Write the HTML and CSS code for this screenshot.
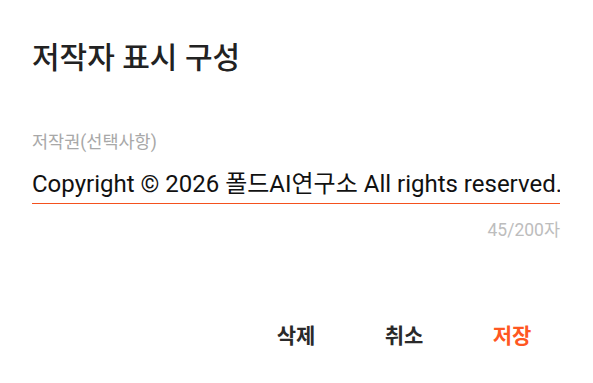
FILE: index.html
```html
<!DOCTYPE html>
<html lang="ko">
<head>
  <meta charset="UTF-8" />
  <meta name="viewport" content="width=device-width, initial-scale=1.0" />
  <title>저작자 표시 구성</title>
  <link rel="stylesheet" href="styles.css">
</head>
<body>
  <div class="dialog">
    <h1 class="dialog-title">저작자 표시 구성</h1>

    <div class="field">
      <label class="field-label" for="copyright">저작권(선택사항)</label>
      <input id="copyright" class="field-input" type="text" value="Copyright © 2026 폴드AI연구소 All rights reserved." />
      <div class="field-counter">45/200자</div>
    </div>

    <div class="dialog-actions">
      <button class="action">삭제</button>
      <button class="action">취소</button>
      <button class="action primary">저장</button>
    </div>
  </div>
</body>
</html>
```

FILE: styles.css
```css
body {
  font-family: Roboto, "Noto Sans CJK KR", sans-serif;
  margin: 0;
  padding: 0;
  background-color: #ffffff;
  color: #212121;
}

.dialog {
  width: 593px;
  height: 383px;
  box-sizing: border-box;
  padding: 38px 33px 0 32px;
}

.dialog-title {
  font-size: 30px;
  font-weight: 500;
  line-height: 40px;
  margin: 0;
  color: #222222;
}

.field {
  margin-top: 52px;
}

.field-label {
  display: block;
  font-size: 17.5px;
  line-height: 24px;
  color: #a8a8a8;
}

.field-input {
  display: block;
  width: 100%;
  box-sizing: border-box;
  margin-top: 10px;
  padding: 0 0 5px 0;
  border: none;
  border-bottom: 1px solid #f4511e;
  outline: none;
  font-family: inherit;
  font-size: 24px;
  line-height: 34px;
  height: 40px;
  color: #111111;
  background: transparent;
}

.field-counter {
  text-align: right;
  font-size: 17.5px;
  line-height: 24px;
  margin-top: 14px;
  color: #bdbdbd;
}

.dialog-actions {
  display: flex;
  justify-content: flex-end;
  margin-top: 72px;
  margin-right: -6px;
}

.action {
  background: none;
  border: none;
  padding: 0;
  width: 108px;
  height: 40px;
  font-family: inherit;
  font-size: 21px;
  font-weight: 700;
  color: #2a2a2a;
  cursor: pointer;
}

.action.primary {
  color: #ff5722;
}
```
